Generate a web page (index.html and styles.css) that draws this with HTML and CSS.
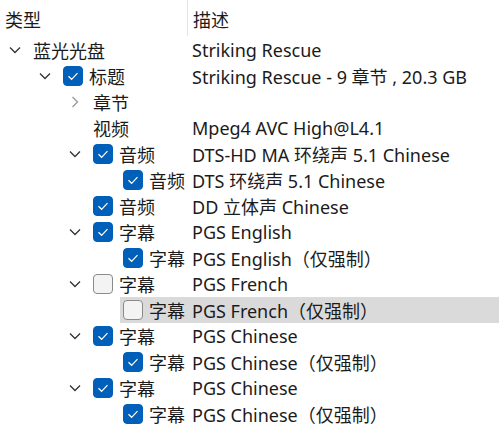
FILE: index.html
```html
<!DOCTYPE html>
<html lang="zh-CN">
<head>
    <meta charset="UTF-8">
    <title>Disc tree</title>
    <link rel="stylesheet" href="styles.css">
</head>
<body>
    <div class="tree">
        <div class="header">
            <div class="col-name">类型</div>
            <div class="col-desc">描述</div>
        </div>

        <div class="row l0">
            <span class="exp down"><svg width="12" height="8" viewBox="0 0 12 8"><polyline points="1,1.5 6,6.5 11,1.5"/></svg></span>
            <div class="cell"><div class="name">蓝光光盘</div><div class="desc">Striking Rescue</div></div>
        </div>
        <div class="row l1">
            <span class="exp down"><svg width="12" height="8" viewBox="0 0 12 8"><polyline points="1,1.5 6,6.5 11,1.5"/></svg></span>
            <div class="cell"><div class="name"><span class="box on"><svg width="20" height="20" viewBox="0 0 20 20"><polyline points="5.5,10.3 8.6,13.3 14.5,7.2"/></svg></span>标题</div><div class="desc">Striking Rescue - 9 章节 , 20.3 GB</div></div>
        </div>
        <div class="row l2">
            <span class="exp right"><svg width="8" height="12" viewBox="0 0 8 12"><polyline points="1.5,1 6.5,6 1.5,11"/></svg></span>
            <div class="cell"><div class="name">章节</div><div class="desc"></div></div>
        </div>
        <div class="row l2">
            <span class="exp"></span>
            <div class="cell"><div class="name">视频</div><div class="desc">Mpeg4 AVC High@L4.1</div></div>
        </div>
        <div class="row l2">
            <span class="exp down"><svg width="12" height="8" viewBox="0 0 12 8"><polyline points="1,1.5 6,6.5 11,1.5"/></svg></span>
            <div class="cell"><div class="name"><span class="box on"><svg width="20" height="20" viewBox="0 0 20 20"><polyline points="5.5,10.3 8.6,13.3 14.5,7.2"/></svg></span>音频</div><div class="desc">DTS-HD MA 环绕声 5.1 Chinese</div></div>
        </div>
        <div class="row l3">
            <span class="exp"></span>
            <div class="cell"><div class="name"><span class="box on"><svg width="20" height="20" viewBox="0 0 20 20"><polyline points="5.5,10.3 8.6,13.3 14.5,7.2"/></svg></span>音频</div><div class="desc">DTS 环绕声 5.1 Chinese</div></div>
        </div>
        <div class="row l2">
            <span class="exp"></span>
            <div class="cell"><div class="name"><span class="box on"><svg width="20" height="20" viewBox="0 0 20 20"><polyline points="5.5,10.3 8.6,13.3 14.5,7.2"/></svg></span>音频</div><div class="desc">DD 立体声 Chinese</div></div>
        </div>
        <div class="row l2">
            <span class="exp down"><svg width="12" height="8" viewBox="0 0 12 8"><polyline points="1,1.5 6,6.5 11,1.5"/></svg></span>
            <div class="cell"><div class="name"><span class="box on"><svg width="20" height="20" viewBox="0 0 20 20"><polyline points="5.5,10.3 8.6,13.3 14.5,7.2"/></svg></span>字幕</div><div class="desc">PGS English</div></div>
        </div>
        <div class="row l3">
            <span class="exp"></span>
            <div class="cell"><div class="name"><span class="box on"><svg width="20" height="20" viewBox="0 0 20 20"><polyline points="5.5,10.3 8.6,13.3 14.5,7.2"/></svg></span>字幕</div><div class="desc">PGS English（仅强制）</div></div>
        </div>
        <div class="row l2">
            <span class="exp down"><svg width="12" height="8" viewBox="0 0 12 8"><polyline points="1,1.5 6,6.5 11,1.5"/></svg></span>
            <div class="cell"><div class="name"><span class="box"></span>字幕</div><div class="desc">PGS French</div></div>
        </div>
        <div class="row l3 selected">
            <span class="exp"></span>
            <div class="cell"><div class="name"><span class="box"></span>字幕</div><div class="desc">PGS French（仅强制）</div></div>
        </div>
        <div class="row l2">
            <span class="exp down"><svg width="12" height="8" viewBox="0 0 12 8"><polyline points="1,1.5 6,6.5 11,1.5"/></svg></span>
            <div class="cell"><div class="name"><span class="box on"><svg width="20" height="20" viewBox="0 0 20 20"><polyline points="5.5,10.3 8.6,13.3 14.5,7.2"/></svg></span>字幕</div><div class="desc">PGS Chinese</div></div>
        </div>
        <div class="row l3">
            <span class="exp"></span>
            <div class="cell"><div class="name"><span class="box on"><svg width="20" height="20" viewBox="0 0 20 20"><polyline points="5.5,10.3 8.6,13.3 14.5,7.2"/></svg></span>字幕</div><div class="desc">PGS Chinese（仅强制）</div></div>
        </div>
        <div class="row l2">
            <span class="exp down"><svg width="12" height="8" viewBox="0 0 12 8"><polyline points="1,1.5 6,6.5 11,1.5"/></svg></span>
            <div class="cell"><div class="name"><span class="box on"><svg width="20" height="20" viewBox="0 0 20 20"><polyline points="5.5,10.3 8.6,13.3 14.5,7.2"/></svg></span>字幕</div><div class="desc">PGS Chinese</div></div>
        </div>
        <div class="row l3">
            <span class="exp"></span>
            <div class="cell"><div class="name"><span class="box on"><svg width="20" height="20" viewBox="0 0 20 20"><polyline points="5.5,10.3 8.6,13.3 14.5,7.2"/></svg></span>字幕</div><div class="desc">PGS Chinese（仅强制）</div></div>
        </div>
    </div>
</body>
</html>
```

FILE: styles.css
```css
body {
    margin: 0;
    background: #fff;
    color: #1b1b1b;
    font-family: "Noto Sans", "Noto Sans CJK SC", sans-serif;
    font-size: 18px;
}
.tree {
    width: 499px;
    overflow: hidden;
}
.header {
    display: flex;
    height: 37px;
}
.header .col-name {
    width: 182px;
    padding-left: 5px;
    line-height: 40px;
    border-right: 1px solid #e5e5e5;
    height: 36px;
}
.header .col-desc {
    padding-left: 5px;
    line-height: 40px;
}
.row {
    display: flex;
    height: 26px;
    align-items: center;
    white-space: nowrap;
}
.exp {
    width: 30px;
    height: 26px;
    flex: none;
    display: flex;
    align-items: center;
    justify-content: center;
}
.exp polyline {
    fill: none;
    stroke: #333;
    stroke-width: 1.3;
}
.exp.right polyline {
    stroke: #999;
}
.cell {
    flex: 1;
    display: flex;
    align-items: center;
    height: 26px;
}
.selected .cell {
    background: #dadada;
}
.name {
    display: flex;
    align-items: center;
    padding-left: 3px;
    box-sizing: border-box;
    flex: none;
}
.desc {
    flex: 1;
}
.l0 .name { width: 162px; }
.l1 { margin-left: 30px; }
.l1 .name { width: 132px; }
.l2 { margin-left: 60px; }
.l2 .name { width: 102px; }
.l3 { margin-left: 90px; }
.l3 .name { width: 72px; }
.box {
    width: 20px;
    height: 20px;
    box-sizing: border-box;
    border: 1px solid #8a8a8a;
    border-radius: 4px;
    background: #f3f3f3;
    margin-right: 6px;
    flex: none;
    display: flex;
}
.box.on {
    background: #005fb8;
    border-color: #005fb8;
}
.box svg {
    margin: -1px;
}
.box polyline {
    fill: none;
    stroke: #fff;
    stroke-width: 1.2;
}
```
